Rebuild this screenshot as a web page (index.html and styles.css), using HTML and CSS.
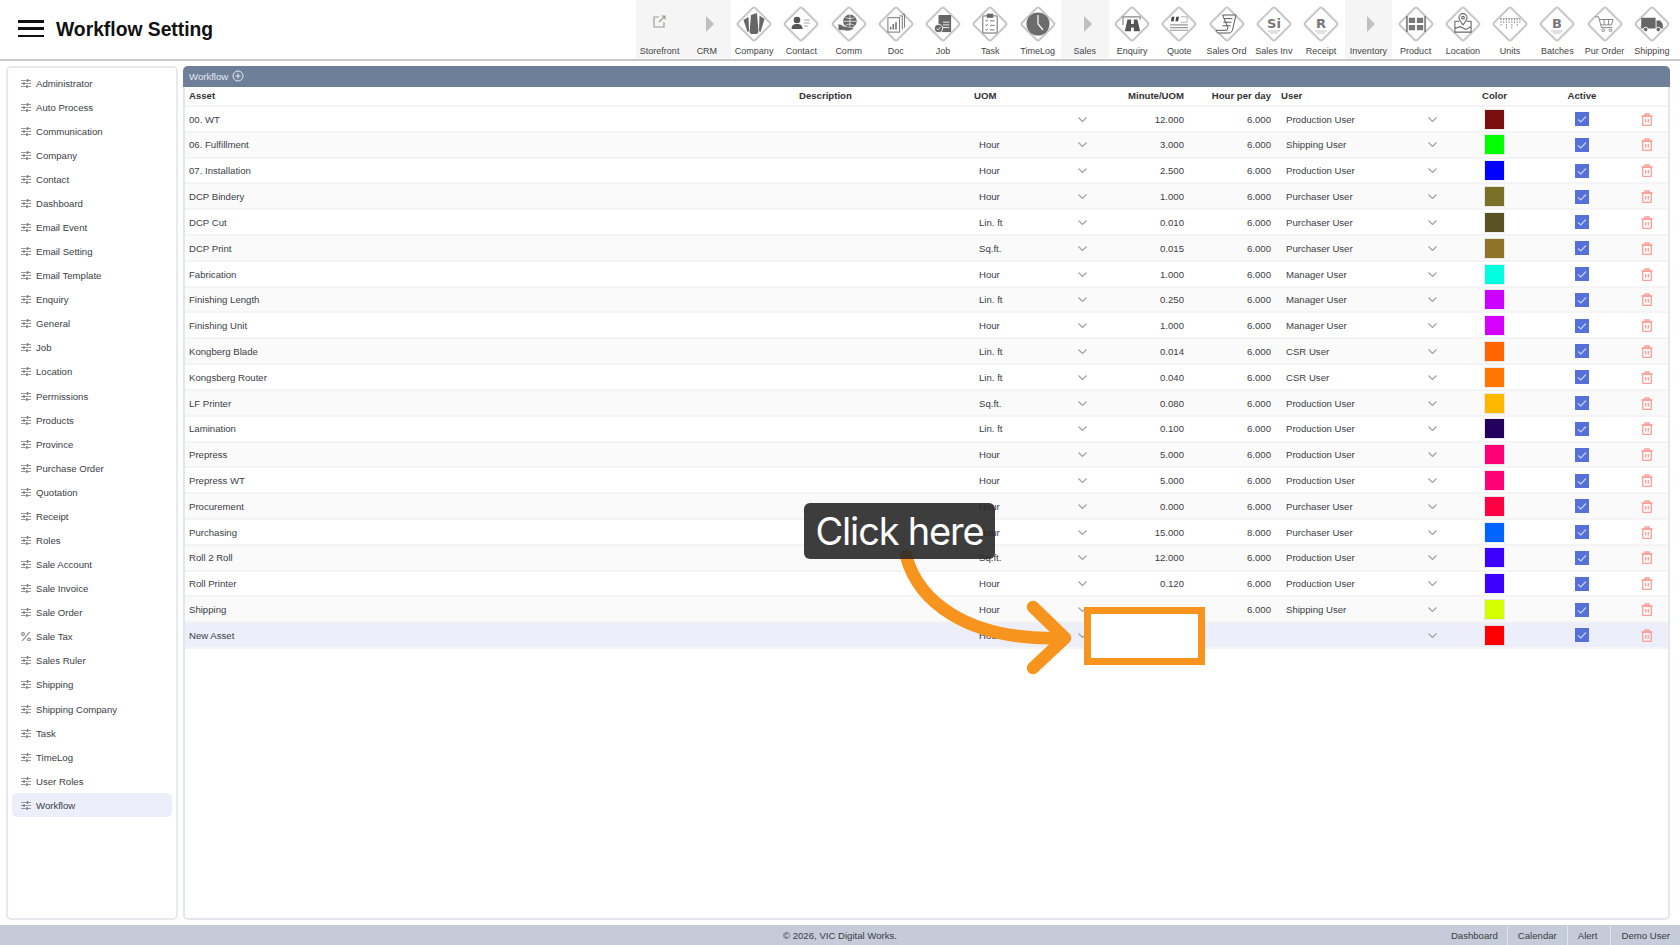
FILE: index.html
```html
<!DOCTYPE html>
<html lang="en">

<head>
    <meta charset="UTF-8">
    <title>Workflow Setting</title>
    <link rel="stylesheet" href="styles.css">
</head>

<body>
    <svg class="sprite">
        <defs>
            <rect id="dia" x="7.750" y="7.750" width="24.500" height="24.500" rx="2.500" transform="rotate(45 20 20)" fill="#fff" stroke="#c8c8c8" stroke-width="2"/>
            <path id="arrow" d="M19 12l8 8-8 8z" fill="#c0c0c0"/>
            <g id="slide" fill="none" stroke="#999" stroke-width="1">
                <path d="M0 1.500h10M0 4.500h10M0 7.500h10"/>
                <path d="M6.500 0v3M3 3v3M6 6v3" stroke="#777" stroke-width="1.300"/>
            </g>
            <g id="pct" fill="none" stroke="#8a8a8a" stroke-width="1.100">
                <path d="M9 0 1 9"/>
                <circle cx="2" cy="2" r="1.400"/>
                <circle cx="8" cy="7.500" r="1.400"/>
            </g>
            <path id="chev" d="M.5 .5 4.500 4.500 8.500 .5" fill="none" stroke="#a2a2a2" stroke-width="1.200"/>
            <path id="tick" d="M3 7.500 5.800 10 11 4.500" fill="none" stroke="#c4d0f4" stroke-width="1.200"/>
            <g id="bin" fill="none" stroke="#ff9d97" stroke-width="1.300">
                <path d="M.5 3h11M4 3V1h4v2"/>
                <rect x="1.700" y="3" width="8.600" height="9.500" rx="1"/>
                <path d="M4.700 6v3.500M7.300 6v3.500"/>
            </g>
            <g id="i-company" fill="#666">
                <path d="M17 11l6-2 1.500 19-1.500 2h-6l-1.500-2z"/>
                <path d="M9.500 16l5-3 .5 14-1.500 1z"/>
                <path d="M30.500 15l-5-3.500-.5 15.500 1.500 1z"/>
            </g>
            <g id="i-contact">
                <circle cx="16" cy="16" r="3.300" fill="#555"/>
                <path d="M10.500 25c0-4 2.500-5 5.500-5s5.500 1 5.500 5z" fill="#555"/>
                <path d="M23 16h6M23 19h6M23 22h4" stroke="#aaa" stroke-width="1.100"/>
            </g>
            <g id="i-comm" transform="translate(2 2) scale(.9)">
                <circle cx="21" cy="17" r="7.500" fill="#666"/>
                <path d="M14 17h14M21 9.500v15M16 12.500c3 2 7 2 10 0M16 21.500c3-2 7-2 10 0" fill="none" stroke="#fff" stroke-width=".8"/>
                <path d="M8 20c4 0 5 3 9 3l6 1c2 0 3 1 1 2-4 2-7 2-9 1H8z" fill="#666" stroke="#fff" stroke-width=".6"/>
            </g>
            <g id="i-doc" fill="none" stroke="#777" stroke-width="1.100" transform="translate(2 2) scale(.9)">
                <rect x="11" y="13" width="13" height="16"/>
                <path d="M24 11h3v15M27 9h2.500v15"/>
                <path d="M14 26v-3M17 26v-6M20 26v-8" stroke-width="1.800"/>
            </g>
            <g id="i-job" transform="translate(2 2) scale(.9)">
                <path d="M15 10h14v19H15z" fill="#666"/>
                <path d="M20 18h7M20 21h7M20 24h7" stroke="#fff" stroke-width="1"/>
                <circle cx="15" cy="25" r="4.500" fill="#666" stroke="#fff"/>
                <path d="M13 25l1.500 1.500 2.500-3" fill="none" stroke="#fff"/>
            </g>
            <g id="i-task" fill="none" stroke="#666" stroke-width="1.100" transform="translate(2 2) scale(.9)">
                <rect x="12" y="11" width="16" height="19" rx="1"/>
                <rect x="17" y="9" width="6" height="3.500" fill="#666"/>
                <path d="M15 16l1 1 1.500-2M15 21l1 1 1.500-2M15 26l1 1 1.500-2M20 16.500h5M20 21.500h5M20 26.500h5" stroke-width="1"/>
            </g>
            <g id="i-clock">
                <circle cx="20" cy="20" r="11.500" fill="#6c6c6c"/>
                <path d="M20 11v9l5 6" fill="none" stroke="#fff" stroke-width="1.200"/>
            </g>
            <g id="i-enquiry" transform="translate(2 2) scale(.9)">
                <path d="M10 21v-9h19v3" fill="none" stroke="#888" stroke-width="1.300"/>
                <path d="M15 15h4v5h3v-5h4l3 13h-7v-4h-3v4h-7z" fill="#555"/>
            </g>
            <g id="i-quote" transform="translate(2 2) scale(.9)">
                <path d="M12 12h3l-1 5h-3zM17 12h3l-1 5h-3z" fill="#444"/>
                <path d="M22 12h7v6h-7" fill="none" stroke="#aaa"/>
                <path d="M10 21h20M10 24h20M10 27h20" stroke="#999" stroke-width="1.200"/>
            </g>
            <g id="i-salesord" fill="none" stroke="#555" stroke-width="1.100" transform="translate(2 2) scale(.9)">
                <path d="M15 10h15l-4 17c-1 3-3 3-5 3H11c-2 0-3-1-3-3h12l1-3z" fill="#fff"/>
                <path d="M17 14h9M16 18h9M15 22h9"/>
            </g>
            <g id="i-rule" stroke="#c4c4c4" stroke-width="1">
                <path d="M14 27h12M16 29h8"/>
            </g>
            <g id="i-product" fill="#777" transform="translate(2 2) scale(.9)">
                <path d="M9 11h1.800v18H9zM29.200 11H31v18h-1.800z"/>
                <path d="M12 13h7v6h-7zM21 13h7v6h-7zM12 21h7v6h-7zM21 21h7v6h-7z"/>
            </g>
            <g id="i-location" fill="none" stroke="#666" stroke-width="1.200" transform="translate(2 2) scale(.9)">
                <path d="M16 17h-5v12h18V17h-5M11 25l6-2 6 3 6-3"/>
                <path d="M20 21c-3-4-4.500-6-4.500-8a4.500 4.500 0 0 1 9 0c0 2-1.500 4-4.500 8z" fill="#fff"/>
                <circle cx="20" cy="13" r="1.500"/>
            </g>
            <g id="i-units" fill="none" stroke="#888" stroke-width="1" transform="translate(2 2) scale(.9)">
                <path d="M9 14h22M10 14v8M13 14v5M16 14v11M19 14v5M22 14v11M25 14v5M28 14v8M31 14v5" stroke-dasharray="2 1"/>
            </g>
            <g id="i-cart" fill="none" stroke="#888" stroke-width="1.100" transform="translate(2 2) scale(.9)">
                <path d="M9 12h4l3 12h12"/>
                <path d="M14 15h15l-2 6H15.500M19 15v6M24 15v6"/>
                <circle cx="18" cy="27" r="1.500"/>
                <circle cx="26" cy="27" r="1.500"/>
            </g>
            <g id="i-truck" fill="#666" transform="translate(2 2) scale(.9)">
                <path d="M8 13h16v12H8zM25 16h4l3 4v5h-7z"/>
                <circle cx="13" cy="26" r="2.500" stroke="#fff"/>
                <circle cx="27" cy="26" r="2.500" stroke="#fff"/>
            </g>
        </defs>
    </svg>

    <header class="top">
        <div class="burger"><i></i><i></i><i></i></div>
        <h1 class="title">Workflow Setting</h1>
        <nav class="tools">
            <a class="tool on"><svg viewBox="0 0 40 40"><g fill="none" stroke="#a39b8f" stroke-width="1.200"><path d="M19 13h-5v10h10v-5"/><path d="M19 18l6-6M21.500 12H25v3.500"/></g></svg>Storefront</a>
            <a class="tool on"><svg viewBox="0 0 40 40"><use href="#arrow"/></svg>CRM</a>
            <a class="tool"><svg viewBox="0 0 40 40"><use href="#dia"/><use href="#i-company"/></svg>Company</a>
            <a class="tool"><svg viewBox="0 0 40 40"><use href="#dia"/><use href="#i-contact"/></svg>Contact</a>
            <a class="tool"><svg viewBox="0 0 40 40"><use href="#dia"/><use href="#i-comm"/></svg>Comm</a>
            <a class="tool"><svg viewBox="0 0 40 40"><use href="#dia"/><use href="#i-doc"/></svg>Doc</a>
            <a class="tool"><svg viewBox="0 0 40 40"><use href="#dia"/><use href="#i-job"/></svg>Job</a>
            <a class="tool"><svg viewBox="0 0 40 40"><use href="#dia"/><use href="#i-task"/></svg>Task</a>
            <a class="tool"><svg viewBox="0 0 40 40"><use href="#dia"/><use href="#i-clock"/></svg>TimeLog</a>
            <a class="tool on"><svg viewBox="0 0 40 40"><use href="#arrow"/></svg>Sales</a>
            <a class="tool"><svg viewBox="0 0 40 40"><use href="#dia"/><use href="#i-enquiry"/></svg>Enquiry</a>
            <a class="tool"><svg viewBox="0 0 40 40"><use href="#dia"/><use href="#i-quote"/></svg>Quote</a>
            <a class="tool"><svg viewBox="0 0 40 40"><use href="#dia"/><use href="#i-salesord"/></svg>Sales Ord</a>
            <a class="tool"><svg viewBox="0 0 40 40"><use href="#dia"/><text class="mono" x="20" y="24" text-anchor="middle">Si</text><use href="#i-rule"/></svg>Sales Inv</a>
            <a class="tool"><svg viewBox="0 0 40 40"><use href="#dia"/><text class="mono" x="20" y="24" text-anchor="middle">R</text><use href="#i-rule"/></svg>Receipt</a>
            <a class="tool on"><svg viewBox="0 0 40 40"><use href="#arrow"/></svg>Inventory</a>
            <a class="tool"><svg viewBox="0 0 40 40"><use href="#dia"/><use href="#i-product"/></svg>Product</a>
            <a class="tool"><svg viewBox="0 0 40 40"><use href="#dia"/><use href="#i-location"/></svg>Location</a>
            <a class="tool"><svg viewBox="0 0 40 40"><use href="#dia"/><use href="#i-units"/></svg>Units</a>
            <a class="tool"><svg viewBox="0 0 40 40"><use href="#dia"/><text class="mono" x="20" y="24" text-anchor="middle">B</text><use href="#i-rule"/></svg>Batches</a>
            <a class="tool"><svg viewBox="0 0 40 40"><use href="#dia"/><use href="#i-cart"/></svg>Pur Order</a>
            <a class="tool"><svg viewBox="0 0 40 40"><use href="#dia"/><use href="#i-truck"/></svg>Shipping</a>
        </nav>
    </header>

    <main class="main">
        <aside class="side">
            <a class="item"><svg class="ico"><use href="#slide"/></svg>Administrator</a>
            <a class="item"><svg class="ico"><use href="#slide"/></svg>Auto Process</a>
            <a class="item"><svg class="ico"><use href="#slide"/></svg>Communication</a>
            <a class="item"><svg class="ico"><use href="#slide"/></svg>Company</a>
            <a class="item"><svg class="ico"><use href="#slide"/></svg>Contact</a>
            <a class="item"><svg class="ico"><use href="#slide"/></svg>Dashboard</a>
            <a class="item"><svg class="ico"><use href="#slide"/></svg>Email Event</a>
            <a class="item"><svg class="ico"><use href="#slide"/></svg>Email Setting</a>
            <a class="item"><svg class="ico"><use href="#slide"/></svg>Email Template</a>
            <a class="item"><svg class="ico"><use href="#slide"/></svg>Enquiry</a>
            <a class="item"><svg class="ico"><use href="#slide"/></svg>General</a>
            <a class="item"><svg class="ico"><use href="#slide"/></svg>Job</a>
            <a class="item"><svg class="ico"><use href="#slide"/></svg>Location</a>
            <a class="item"><svg class="ico"><use href="#slide"/></svg>Permissions</a>
            <a class="item"><svg class="ico"><use href="#slide"/></svg>Products</a>
            <a class="item"><svg class="ico"><use href="#slide"/></svg>Province</a>
            <a class="item"><svg class="ico"><use href="#slide"/></svg>Purchase Order</a>
            <a class="item"><svg class="ico"><use href="#slide"/></svg>Quotation</a>
            <a class="item"><svg class="ico"><use href="#slide"/></svg>Receipt</a>
            <a class="item"><svg class="ico"><use href="#slide"/></svg>Roles</a>
            <a class="item"><svg class="ico"><use href="#slide"/></svg>Sale Account</a>
            <a class="item"><svg class="ico"><use href="#slide"/></svg>Sale Invoice</a>
            <a class="item"><svg class="ico"><use href="#slide"/></svg>Sale Order</a>
            <a class="item"><svg class="ico"><use href="#pct"/></svg>Sale Tax</a>
            <a class="item"><svg class="ico"><use href="#slide"/></svg>Sales Ruler</a>
            <a class="item"><svg class="ico"><use href="#slide"/></svg>Shipping</a>
            <a class="item"><svg class="ico"><use href="#slide"/></svg>Shipping Company</a>
            <a class="item"><svg class="ico"><use href="#slide"/></svg>Task</a>
            <a class="item"><svg class="ico"><use href="#slide"/></svg>TimeLog</a>
            <a class="item"><svg class="ico"><use href="#slide"/></svg>User Roles</a>
            <a class="item active"><svg class="ico"><use href="#slide"/></svg>Workflow</a>
        </aside>

        <section class="panel">
            <div class="panel-head">Workflow
                <svg class="plus" viewBox="0 0 12 12"><circle cx="6" cy="6" r="5" fill="none" stroke="#e6eaf2"/><path d="M3.500 6h5M6 3.500v5" stroke="#e6eaf2"/></svg>
            </div>
            <div class="row head">
                <span class="c-asset">Asset</span><span class="c-desc">Description</span><span class="c-uom">UOM</span><span class="num">Minute/UOM</span><span class="num">Hour per day</span><span class="c-uom">User</span><span class="mid">Color</span><span class="mid">Active</span><span></span>
            </div>
            <div class="rows">
                <div class="row"><span class="c-asset">00. WT</span><span></span><span class="pick"><b></b><svg class="chev"><use href="#chev"/></svg></span><span class="num">12.000</span><span class="num">6.000</span><span class="pick"><b>Production User</b><svg class="chev"><use href="#chev"/></svg></span><span class="mid"><i class="swatch" style="background:#7a0f0f"></i></span><span class="mid"><svg class="check" viewBox="0 0 14 14"><use href="#tick"/></svg></span><span class="mid"><svg class="bin"><use href="#bin"/></svg></span></div>
                <div class="row"><span class="c-asset">06. Fulfillment</span><span></span><span class="pick"><b>Hour</b><svg class="chev"><use href="#chev"/></svg></span><span class="num">3.000</span><span class="num">6.000</span><span class="pick"><b>Shipping User</b><svg class="chev"><use href="#chev"/></svg></span><span class="mid"><i class="swatch" style="background:#00ff00"></i></span><span class="mid"><svg class="check" viewBox="0 0 14 14"><use href="#tick"/></svg></span><span class="mid"><svg class="bin"><use href="#bin"/></svg></span></div>
                <div class="row"><span class="c-asset">07. Installation</span><span></span><span class="pick"><b>Hour</b><svg class="chev"><use href="#chev"/></svg></span><span class="num">2.500</span><span class="num">6.000</span><span class="pick"><b>Production User</b><svg class="chev"><use href="#chev"/></svg></span><span class="mid"><i class="swatch" style="background:#0000ff"></i></span><span class="mid"><svg class="check" viewBox="0 0 14 14"><use href="#tick"/></svg></span><span class="mid"><svg class="bin"><use href="#bin"/></svg></span></div>
                <div class="row"><span class="c-asset">DCP Bindery</span><span></span><span class="pick"><b>Hour</b><svg class="chev"><use href="#chev"/></svg></span><span class="num">1.000</span><span class="num">6.000</span><span class="pick"><b>Purchaser User</b><svg class="chev"><use href="#chev"/></svg></span><span class="mid"><i class="swatch" style="background:#7a7028"></i></span><span class="mid"><svg class="check" viewBox="0 0 14 14"><use href="#tick"/></svg></span><span class="mid"><svg class="bin"><use href="#bin"/></svg></span></div>
                <div class="row"><span class="c-asset">DCP Cut</span><span></span><span class="pick"><b>Lin. ft</b><svg class="chev"><use href="#chev"/></svg></span><span class="num">0.010</span><span class="num">6.000</span><span class="pick"><b>Purchaser User</b><svg class="chev"><use href="#chev"/></svg></span><span class="mid"><i class="swatch" style="background:#5a5224"></i></span><span class="mid"><svg class="check" viewBox="0 0 14 14"><use href="#tick"/></svg></span><span class="mid"><svg class="bin"><use href="#bin"/></svg></span></div>
                <div class="row"><span class="c-asset">DCP Print</span><span></span><span class="pick"><b>Sq.ft.</b><svg class="chev"><use href="#chev"/></svg></span><span class="num">0.015</span><span class="num">6.000</span><span class="pick"><b>Purchaser User</b><svg class="chev"><use href="#chev"/></svg></span><span class="mid"><i class="swatch" style="background:#8f7428"></i></span><span class="mid"><svg class="check" viewBox="0 0 14 14"><use href="#tick"/></svg></span><span class="mid"><svg class="bin"><use href="#bin"/></svg></span></div>
                <div class="row"><span class="c-asset">Fabrication</span><span></span><span class="pick"><b>Hour</b><svg class="chev"><use href="#chev"/></svg></span><span class="num">1.000</span><span class="num">6.000</span><span class="pick"><b>Manager User</b><svg class="chev"><use href="#chev"/></svg></span><span class="mid"><i class="swatch" style="background:#00ffe1"></i></span><span class="mid"><svg class="check" viewBox="0 0 14 14"><use href="#tick"/></svg></span><span class="mid"><svg class="bin"><use href="#bin"/></svg></span></div>
                <div class="row"><span class="c-asset">Finishing Length</span><span></span><span class="pick"><b>Lin. ft</b><svg class="chev"><use href="#chev"/></svg></span><span class="num">0.250</span><span class="num">6.000</span><span class="pick"><b>Manager User</b><svg class="chev"><use href="#chev"/></svg></span><span class="mid"><i class="swatch" style="background:#cc00ff"></i></span><span class="mid"><svg class="check" viewBox="0 0 14 14"><use href="#tick"/></svg></span><span class="mid"><svg class="bin"><use href="#bin"/></svg></span></div>
                <div class="row"><span class="c-asset">Finishing Unit</span><span></span><span class="pick"><b>Hour</b><svg class="chev"><use href="#chev"/></svg></span><span class="num">1.000</span><span class="num">6.000</span><span class="pick"><b>Manager User</b><svg class="chev"><use href="#chev"/></svg></span><span class="mid"><i class="swatch" style="background:#d600ff"></i></span><span class="mid"><svg class="check" viewBox="0 0 14 14"><use href="#tick"/></svg></span><span class="mid"><svg class="bin"><use href="#bin"/></svg></span></div>
                <div class="row"><span class="c-asset">Kongberg Blade</span><span></span><span class="pick"><b>Lin. ft</b><svg class="chev"><use href="#chev"/></svg></span><span class="num">0.014</span><span class="num">6.000</span><span class="pick"><b>CSR User</b><svg class="chev"><use href="#chev"/></svg></span><span class="mid"><i class="swatch" style="background:#ff6600"></i></span><span class="mid"><svg class="check" viewBox="0 0 14 14"><use href="#tick"/></svg></span><span class="mid"><svg class="bin"><use href="#bin"/></svg></span></div>
                <div class="row"><span class="c-asset">Kongsberg Router</span><span></span><span class="pick"><b>Lin. ft</b><svg class="chev"><use href="#chev"/></svg></span><span class="num">0.040</span><span class="num">6.000</span><span class="pick"><b>CSR User</b><svg class="chev"><use href="#chev"/></svg></span><span class="mid"><i class="swatch" style="background:#ff7700"></i></span><span class="mid"><svg class="check" viewBox="0 0 14 14"><use href="#tick"/></svg></span><span class="mid"><svg class="bin"><use href="#bin"/></svg></span></div>
                <div class="row"><span class="c-asset">LF Printer</span><span></span><span class="pick"><b>Sq.ft.</b><svg class="chev"><use href="#chev"/></svg></span><span class="num">0.080</span><span class="num">6.000</span><span class="pick"><b>Production User</b><svg class="chev"><use href="#chev"/></svg></span><span class="mid"><i class="swatch" style="background:#ffb800"></i></span><span class="mid"><svg class="check" viewBox="0 0 14 14"><use href="#tick"/></svg></span><span class="mid"><svg class="bin"><use href="#bin"/></svg></span></div>
                <div class="row"><span class="c-asset">Lamination</span><span></span><span class="pick"><b>Lin. ft</b><svg class="chev"><use href="#chev"/></svg></span><span class="num">0.100</span><span class="num">6.000</span><span class="pick"><b>Production User</b><svg class="chev"><use href="#chev"/></svg></span><span class="mid"><i class="swatch" style="background:#22005c"></i></span><span class="mid"><svg class="check" viewBox="0 0 14 14"><use href="#tick"/></svg></span><span class="mid"><svg class="bin"><use href="#bin"/></svg></span></div>
                <div class="row"><span class="c-asset">Prepress</span><span></span><span class="pick"><b>Hour</b><svg class="chev"><use href="#chev"/></svg></span><span class="num">5.000</span><span class="num">6.000</span><span class="pick"><b>Production User</b><svg class="chev"><use href="#chev"/></svg></span><span class="mid"><i class="swatch" style="background:#ff0078"></i></span><span class="mid"><svg class="check" viewBox="0 0 14 14"><use href="#tick"/></svg></span><span class="mid"><svg class="bin"><use href="#bin"/></svg></span></div>
                <div class="row"><span class="c-asset">Prepress WT</span><span></span><span class="pick"><b>Hour</b><svg class="chev"><use href="#chev"/></svg></span><span class="num">5.000</span><span class="num">6.000</span><span class="pick"><b>Production User</b><svg class="chev"><use href="#chev"/></svg></span><span class="mid"><i class="swatch" style="background:#ff0078"></i></span><span class="mid"><svg class="check" viewBox="0 0 14 14"><use href="#tick"/></svg></span><span class="mid"><svg class="bin"><use href="#bin"/></svg></span></div>
                <div class="row"><span class="c-asset">Procurement</span><span></span><span class="pick"><b>Hour</b><svg class="chev"><use href="#chev"/></svg></span><span class="num">0.000</span><span class="num">6.000</span><span class="pick"><b>Purchaser User</b><svg class="chev"><use href="#chev"/></svg></span><span class="mid"><i class="swatch" style="background:#ff0044"></i></span><span class="mid"><svg class="check" viewBox="0 0 14 14"><use href="#tick"/></svg></span><span class="mid"><svg class="bin"><use href="#bin"/></svg></span></div>
                <div class="row"><span class="c-asset">Purchasing</span><span></span><span class="pick"><b>Hour</b><svg class="chev"><use href="#chev"/></svg></span><span class="num">15.000</span><span class="num">8.000</span><span class="pick"><b>Purchaser User</b><svg class="chev"><use href="#chev"/></svg></span><span class="mid"><i class="swatch" style="background:#0064ff"></i></span><span class="mid"><svg class="check" viewBox="0 0 14 14"><use href="#tick"/></svg></span><span class="mid"><svg class="bin"><use href="#bin"/></svg></span></div>
                <div class="row"><span class="c-asset">Roll 2 Roll</span><span></span><span class="pick"><b>Sq.ft.</b><svg class="chev"><use href="#chev"/></svg></span><span class="num">12.000</span><span class="num">6.000</span><span class="pick"><b>Production User</b><svg class="chev"><use href="#chev"/></svg></span><span class="mid"><i class="swatch" style="background:#3c00ff"></i></span><span class="mid"><svg class="check" viewBox="0 0 14 14"><use href="#tick"/></svg></span><span class="mid"><svg class="bin"><use href="#bin"/></svg></span></div>
                <div class="row"><span class="c-asset">Roll Printer</span><span></span><span class="pick"><b>Hour</b><svg class="chev"><use href="#chev"/></svg></span><span class="num">0.120</span><span class="num">6.000</span><span class="pick"><b>Production User</b><svg class="chev"><use href="#chev"/></svg></span><span class="mid"><i class="swatch" style="background:#3c00ff"></i></span><span class="mid"><svg class="check" viewBox="0 0 14 14"><use href="#tick"/></svg></span><span class="mid"><svg class="bin"><use href="#bin"/></svg></span></div>
                <div class="row"><span class="c-asset">Shipping</span><span></span><span class="pick"><b>Hour</b><svg class="chev"><use href="#chev"/></svg></span><span class="num">12.000</span><span class="num">6.000</span><span class="pick"><b>Shipping User</b><svg class="chev"><use href="#chev"/></svg></span><span class="mid"><i class="swatch" style="background:#d4ff00"></i></span><span class="mid"><svg class="check" viewBox="0 0 14 14"><use href="#tick"/></svg></span><span class="mid"><svg class="bin"><use href="#bin"/></svg></span></div>
                <div class="row new"><span class="c-asset">New Asset</span><span></span><span class="pick"><b>Hour</b><svg class="chev"><use href="#chev"/></svg></span><span class="num"></span><span class="num"></span><span class="pick"><b></b><svg class="chev"><use href="#chev"/></svg></span><span class="mid"><i class="swatch" style="background:#ff0000"></i></span><span class="mid"><svg class="check" viewBox="0 0 14 14"><use href="#tick"/></svg></span><span class="mid"><svg class="bin"><use href="#bin"/></svg></span></div>
            </div>
        </section>
    </main>

    <footer class="foot">
        <span></span>
        <span class="copy">© 2026, VIC Digital Works.</span>
        <nav class="foot-nav"><a>Dashboard</a><a>Calendar</a><a>Alert</a><a>Demo User</a></nav>
    </footer>

    <!-- tutorial annotation on top of the page -->
    <svg class="mark" viewBox="0 0 1680 945">
        <path d="M906 556C918 600 965 641 1062 638" fill="none" stroke="#f7941d" stroke-width="12.500" stroke-linecap="round"/>
        <path d="M1033 607 1065 638 1033 668" fill="none" stroke="#f7941d" stroke-width="12.500" stroke-linecap="round" stroke-linejoin="round"/>
        <rect x="1087.500" y="610.500" width="114" height="51" fill="#fff" stroke="#f7941d" stroke-width="7"/>
    </svg>
    <div class="callout">Click here</div>
</body>

</html>
```

FILE: styles.css
```css
* {
    box-sizing: border-box;
}

body {
    margin: 0;
    width: 1680px;
    height: 945px;
    position: relative;
    overflow: hidden;
    display: flex;
    flex-direction: column;
    background: #fff;
    color: #3b3e45;
    font-family: "Liberation Sans", Arial, sans-serif;
    font-size: 9.6px;
}

.sprite {
    display: none;
}

/* top bar */
.top {
    height: 61px;
    display: flex;
    align-items: flex-start;
    border-bottom: 2px solid #c9c9c9;
    padding-right: 4.5px;
}

.burger {
    width: 26px;
    height: 17px;
    margin: 20px 12px 0 18px;
    display: flex;
    flex-direction: column;
    justify-content: space-between;
}

.burger i {
    height: 2.5px;
    background: #111;
}

.title {
    margin: 18px 0 0;
    font-size: 19.3px;
    line-height: 24px;
    font-weight: bold;
    color: #111;
}

.tools {
    margin-left: auto;
    display: grid;
    grid-template-columns: repeat(22, 47.25px);
}

.tool {
    height: 59px;
    padding-top: 4px;
    display: flex;
    flex-direction: column;
    align-items: center;
    font-size: 9px;
    line-height: 11px;
    color: #444;
    white-space: nowrap;
}

.tool svg {
    width: 40px;
    height: 40px;
    margin-bottom: 2px;
}

.tool.on {
    background: #f5f5f5;
}

.mono {
    font-family: "DejaVu Sans", sans-serif;
    font-size: 13px;
    font-weight: bold;
    fill: #777;
}

/* body */
.main {
    flex: 1;
    min-height: 0;
    display: flex;
    gap: 5px;
    padding: 5px 10px 5px 6px;
}

.side {
    width: 172px;
    flex: none;
    padding: 3px 4px 0;
    border: 2px solid #e7e9ef;
    border-radius: 5px;
}

.item {
    height: 24.08px;
    padding-left: 9px;
    display: flex;
    align-items: center;
    gap: 5px;
    border-radius: 5px;
}

.item.active {
    background: #eceef9;
}

.ico {
    width: 10px;
    height: 9px;
}

.panel {
    flex: 1;
    min-width: 0;
    border: 2px solid #e4e6ee;
    border-top: 0;
    border-radius: 5px;
}

.panel-head {
    height: 20.7px;
    margin: 0 -2px;
    padding-left: 6px;
    display: flex;
    align-items: center;
    gap: 4px;
    background: #6e7f99;
    border-radius: 5px 5px 0 0;
    color: #e6eaf2;
}

.plus {
    width: 12px;
    height: 12px;
}

.row {
    display: grid;
    grid-template-columns: 609px 175px 131px 89px 87px 174px 89px 86px 1fr;
    align-items: center;
    height: 25.82px;
    padding-top: .5px;
    border-bottom: 2px solid #f4f4f4;
}

.row.head {
    height: 20.3px;
    padding: 0 0 1.5px;
    font-weight: bold;
    color: #333;
}

.rows .row:nth-child(even) {
    background: #fafafa;
}

.rows .row.new {
    background: #eceef9;
}

.c-asset {
    padding-left: 4px;
}

.c-desc,
.c-uom {
    padding-left: 5px;
}

.num {
    padding-right: 5px;
    text-align: right;
}

.mid {
    display: flex;
    justify-content: center;
    align-items: center;
}

.pick {
    display: flex;
    justify-content: space-between;
    align-items: center;
    padding: 0 13px 0 10px;
}

.pick b {
    font-weight: normal;
}

.chev {
    width: 9px;
    height: 5px;
}

.swatch {
    display: block;
    width: 19.5px;
    height: 19px;
    outline: 1px solid rgba(0, 0, 0, .08);
}

.check {
    width: 14px;
    height: 14px;
    background: #5570d8;
}

.bin {
    width: 12px;
    height: 13px;
    margin-left: 1px;
}

/* footer */
.foot {
    height: 20px;
    display: grid;
    grid-template-columns: 1fr auto 1fr;
    align-items: center;
    background: #c5cbd8;
}

.foot-nav {
    justify-self: end;
    display: flex;
    height: 100%;
}

.foot-nav a {
    display: flex;
    align-items: center;
    padding: 0 10px;
    border-left: 1px solid #dfe2ea;
}

.foot-nav a:first-child {
    border-left: 0;
    padding-right: 9px;
}

.foot-nav a:nth-child(3) {
    padding-right: 13px;
}

/* annotation */
.mark {
    position: absolute;
    left: 0;
    top: 0;
    width: 1680px;
    height: 945px;
}

.callout {
    position: absolute;
    left: 804px;
    top: 503px;
    width: 191px;
    height: 56px;
    display: flex;
    align-items: center;
    justify-content: center;
    border-radius: 6px;
    background: rgba(40, 40, 40, .9);
    color: #fff;
    font-family: Inter, sans-serif;
    font-size: 38px;
    letter-spacing: -1.2px;
}
```
